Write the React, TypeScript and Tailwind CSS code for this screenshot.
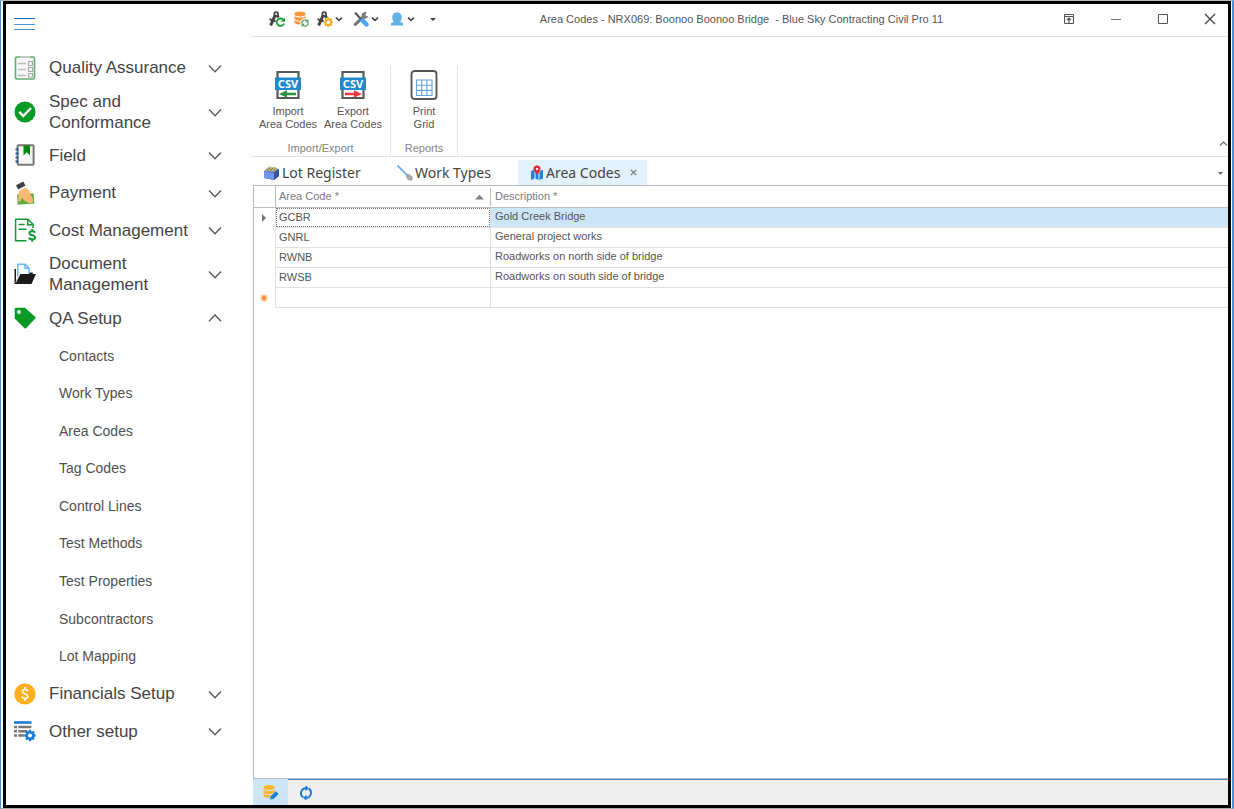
import type { ReactNode } from "react";

type IconProps = { children: ReactNode; box?: string; className?: string };

function Svg({ children, box = "0 0 22 22", className = "size-[22px]" }: IconProps) {
  return (
    <svg viewBox={box} className={`shrink-0 ${className}`} fill="none" aria-hidden="true">
      {children}
    </svg>
  );
}

function Chevron({ up = false }: { up?: boolean }) {
  return (
    <Svg box="0 0 14 14" className="size-[14px]">
      <path d={up ? "M1 10.2 7 4 13 10.2" : "M1 4.500 7 10.700 13 4.500"} stroke="#5a5a5a" strokeWidth="1.4" />
    </Svg>
  );
}

function SmallChevron() {
  return (
    <Svg box="0 0 8 8" className="size-2">
      <path d="M1 2.600 4 5.400 7 2.600" stroke="#444" strokeWidth="1.600" />
    </Svg>
  );
}

const gearPath =
  "M-1.2-6h2.4l.4 1.7 1.1.5 1.5-1L5.9-3.100l-1 1.500.5 1.100L7-.1v2.200l-1.700.4-.5 1.100 1 1.500L4.200 6.700l-1.500-1-1.100.5L1.200 8h-2.400l-.4-1.700-1.100-.5-1.500 1L-5.900 5.100l1-1.500-.5-1.100L-7 2.100V-.1l1.700-.4.5-1.100-1-1.500L-4.200-4.800l1.500 1 1.100-.5z";

function Gear({ x, y, scale, color }: { x: number; y: number; scale: number; color: string }) {
  return (
    <g transform={`translate(${x} ${y}) scale(${scale}) translate(0 -1)`}>
      <path d={gearPath} fill={color} />
      <circle cx="0" cy="1" r="2.500" fill="#fff" />
    </g>
  );
}

function Compass() {
  return (
    <g>
      <circle cx="7.200" cy="3" r="1.900" stroke="#444" strokeWidth="1.700" />
      <path d="M6 4.500 1.700 14.500M8.400 4.500 12 13" stroke="#444" strokeWidth="3" />
      <path d="M.5 8Q6 12.300 13 8.500" stroke="#444" strokeWidth="1.800" />
    </g>
  );
}

function Cycle({ x, y, scale, color, width = 2 }: { x: number; y: number; scale: number; color: string; width?: number }) {
  return (
    <g transform={`translate(${x} ${y}) scale(${scale})`}>
      <path d="M-4.500 1A4.600 4.600 0 0 1 3-3.500M4.500-1A4.600 4.600 0 0 1-3 3.500" stroke={color} strokeWidth={width} />
      <path d="M5-6v5H0zM-5 6V1h5z" fill={color} />
    </g>
  );
}

const icons = {
  quality: (
    <Svg box="0 0 22 24" className="h-6 w-[22px]">
      <rect x="1.500" y="1" width="19" height="22" rx="1.500" fill="#f8f8f8" stroke="#5cae6c" strokeWidth="1.600" />
      <path d="M6 1h10" stroke="#c8c8c8" strokeWidth="2" />
      <path d="M4 7.500h8M4 13.500h8M4 19.500h8" stroke="#bbb" strokeWidth="1.600" />
      <path d="M14.500 5.500h4v4h-4zM14.500 11.500h4v4h-4zM14.500 17.500h4v3.500h-4z" stroke="#aaa" strokeWidth="1.200" />
    </Svg>
  ),
  spec: (
    <Svg>
      <circle cx="11" cy="11" r="10.500" fill="#069b25" />
      <path d="m5.300 10.800 4 4.200 7.700-8" stroke="#fff" strokeWidth="2.400" />
    </Svg>
  ),
  field: (
    <Svg>
      <rect x="3.600" y="1.200" width="16" height="19.600" rx="1" fill="#f7f7f7" stroke="#777" strokeWidth="2" />
      <path d="M1.500 5.500h3M1.500 9.500h3M1.500 13.500h3M1.500 17.500h3" stroke="#275a91" strokeWidth="1.800" />
      <path d="M9.500 1.500H16V11.500l-3.250-3.200L9.500 11.500z" fill="#07860c" />
    </Svg>
  ),
  payment: (
    <Svg box="0 0 22 24" className="h-6 w-[22px]">
      <path d="m3 13.500 16.500-1.200.8 10.200L3.800 23.700z" fill="#5daf40" />
      <path
        d="M5 9.500 11.500 6.300c3.200 2 4.500 4.200 5 7 1.500 2.500 3 5.200 2.500 7-.4 1.700-2 1.500-3 1.800-1.500 0-2.500-.7-3.700-1.300C10.500 19.800 8.600 18 8 16.300L6.500 20c-.5 1.300-2.300.8-2.200-.5.300-2.500.2-4 .2-5.500 0-1.700 0-3 .5-4.500"
        fill="#fdbb76"
      />
      <path d="m10.500 17 4 4M12.700 15.300l4.200 4.500M14.500 13.500l3.500 4" stroke="#eda55e" strokeWidth=".8" />
      <path d="M2 4.200 9.300.5l2.200 4.300-7.300 3.700z" fill="#3c3f42" />
      <path d="m4.200 8.500 7.300-3.700.7 1.400L5 9.900z" fill="#f3f3f3" />
    </Svg>
  ),
  cost: (
    <Svg box="0 0 22 24" className="h-6 w-[22px]">
      <path d="M12.500 22.700H1.600V1.200H14l5 5V10M13.700 1.500v5.200H19M4.500 6.500h6M4.500 11.300h8" stroke="#129b35" strokeWidth="1.500" />
      <path
        d="M20.900 14.700c-.6-2-5.400-2-5.400.5 0 2.700 5.600 1.400 5.600 4.300 0 2.600-5.400 2.500-6 0M18.200 11v2.200M18.200 21.400v2.300"
        stroke="#129b35"
        strokeWidth="2.100"
      />
    </Svg>
  ),
  document: (
    <Svg>
      <path d="M.5 6h1.500v12L6 11h16l-4.500 10H.5z" fill="#1a1a1a" />
      <path d="M3.800 14V1h7.400l4 4v6H6.300z" fill="#f6fbff" />
      <path d="M3.800 13.500V1.200h7.400l3.800 3.800v6M11 1.500v3.800h3.800" stroke="#69b4f2" strokeWidth="1.400" />
      <path d="M15.500 9.500h3.300v2h-3.300z" fill="#1a1a1a" />
      <path d="M1.800 19.500 5.700 11.500" stroke="#fff" strokeWidth=".8" />
    </Svg>
  ),
  tag: (
    <Svg>
      <path d="M.7 1.500Q.7.700 1.500.700H11l10.300 9.300q.7.700 0 1.400L12 21.200q-.8.700-1.500 0L.7 11.500z" fill="#079b26" />
      <circle cx="5" cy="5" r="1.900" fill="#fff" />
    </Svg>
  ),
  finance: (
    <Svg>
      <circle cx="11" cy="11" r="10.600" fill="#ffb01c" />
      <path
        d="M13.900 8.200C13.300 6 8.400 6 8.400 8.600c0 2.900 5.400 1.800 5.400 4.800 0 2.700-5.400 2.700-5.900 0M11 4v2.500M11 15.500V18"
        stroke="#fff"
        strokeWidth="1.500"
      />
    </Svg>
  ),
  other: (
    <Svg>
      <path d="M0 2.500h17.500" stroke="#187bd5" strokeWidth="2.600" />
      <path d="M0 7h3M4.300 7h13M0 11.200h3M4.300 11.200h9M0 15.500h3M4.300 15.500h6" stroke="#777" strokeWidth="2.500" />
      <Gear x={16} y={15.500} scale={0.82} color="#187bd5" />
    </Svg>
  ),
};

function CsvIcon({ exporting = false }: { exporting?: boolean }) {
  return (
    <Svg box="0 0 28 30" className="h-[30px] w-7">
      <path d="M3.500 8V2h21v6M3.500 20v8h21V20" fill="#fff" stroke="#595959" strokeWidth="2.200" />
      <rect x="1" y="7.500" width="26" height="12.500" fill="#2089cf" />
      <text x="14" y="17.500" textAnchor="middle" fill="#fff" fontFamily="'Noto Sans', sans-serif" fontWeight="700" fontSize="11">
        CSV
      </text>
      {exporting ? (
        <path d="M6 22.700h9v-2.500l8 3.800-8 3.800v-2.500H6z" fill="#ee3538" />
      ) : (
        <path d="M22 22.700h-9v-2.500L5 24l8 3.800v-2.500h9z" fill="#2b9042" />
      )}
    </Svg>
  );
}

function Database({ color }: { color: string }) {
  return (
    <path
      d="M.5 3C.5.300 11.500.300 11.500 3v1.200C11.500 6.500.5 6.500.5 4.200zM.5 5.500c1.500 2 9.500 2 11 0v2.800C11.500 10.800.5 10.800.5 8.300zM.5 9.600c1.500 2 9.500 2 11 0v2.500c0 2.600-11 2.600-11 0z"
      fill={color}
    />
  );
}

type Section = { label: string; icon: ReactNode; children?: string[]; tall?: boolean };

const sections: Section[] = [
  { label: "Quality Assurance", icon: icons.quality },
  { label: "Spec and Conformance", icon: icons.spec, tall: true },
  { label: "Field", icon: icons.field },
  { label: "Payment", icon: icons.payment },
  { label: "Cost Management", icon: icons.cost },
  { label: "Document Management", icon: icons.document, tall: true },
  {
    label: "QA Setup",
    icon: icons.tag,
    children: [
      "Contacts",
      "Work Types",
      "Area Codes",
      "Tag Codes",
      "Control Lines",
      "Test Methods",
      "Test Properties",
      "Subcontractors",
      "Lot Mapping",
    ],
  },
  { label: "Financials Setup", icon: icons.finance },
  { label: "Other setup", icon: icons.other },
];

function Sidebar() {
  return (
    <aside className="flex w-[245px] shrink-0 flex-col">
      <button type="button" aria-label="Toggle menu" className="mt-[14px] ml-2 flex h-3 w-[21px] shrink-0 flex-col justify-between">
        <span className="h-px w-full bg-[#1670bd]" />
        <span className="h-px w-full bg-[#4b97d4]" />
        <span className="h-px w-full bg-[#4b97d4]" />
      </button>
      <nav className="mt-[19px] mb-[55px] flex min-h-[660px] flex-1 flex-col">
        {sections.map((section) => (
          <div key={section.label} className="contents">
            <button
              type="button"
              aria-expanded={Boolean(section.children)}
              className={`flex items-center pr-[29px] pl-2 text-left text-[17px] leading-[21px] text-[#444] ${
                section.tall ? "h-[50px] shrink-0" : "flex-1"
              }`}
            >
              <span className="flex w-[35px] shrink-0 items-center">{section.icon}</span>
              <span className="w-[148px]">{section.label}</span>
              <span className="ml-auto">
                <Chevron up={Boolean(section.children)} />
              </span>
            </button>
            {section.children && (
              <ul className="flex flex-9 flex-col">
                {section.children.map((child) => (
                  <li key={child} className="flex flex-1">
                    <a href="#" className="flex flex-1 items-center pl-[53px] text-[14px] leading-4 text-[#505050]">
                      {child}
                    </a>
                  </li>
                ))}
              </ul>
            )}
          </div>
        ))}
      </nav>
    </aside>
  );
}

function TitleBar() {
  return (
    <header className="flex h-[33px] shrink-0 items-center border-b border-[#e2e2e2] pb-[2px]">
      <div className="flex w-[210px] shrink-0 items-center pl-[18px]">
        <button type="button" aria-label="Refresh lookups" className="mr-2 flex">
          <Svg box="0 0 16 16" className="size-4">
            <Compass />
            <circle cx="11.500" cy="11" r="5" fill="#fff" />
            <path d="M14.500 9A3.700 3.700 0 1 0 15 12.500" stroke="#16a335" strokeWidth="1.800" />
            <path d="M16 6.500v4.300h-4.300z" fill="#16a335" />
          </Svg>
        </button>
        <button type="button" aria-label="Refresh data" className="mr-2 flex">
          <Svg box="0 0 16 16" className="size-4">
            <g transform="translate(1 -.5)">
              <Database color="#fb9640" />
            </g>
            <circle cx="12" cy="12" r="4.700" fill="#fff" />
            <Cycle x={12} y={12} scale={0.68} color="#48a565" width={1.800} />
          </Svg>
        </button>
        <button type="button" aria-label="Settings" className="mr-[10px] flex items-center gap-[2px]">
          <Svg box="0 0 16 16" className="size-4">
            <Compass />
            <circle cx="11.500" cy="11.500" r="5" fill="#fff" />
            <Gear x={11.300} y={11.200} scale={0.7} color="#f6ae25" />
          </Svg>
          <SmallChevron />
        </button>
        <button type="button" aria-label="Tools" className="mr-[10px] flex items-center gap-[2px]">
          <Svg box="0 0 16 16" className="size-4">
            <path d="m2.300 13.300 9-8.500" stroke="#777" strokeWidth="3.200" strokeLinecap="round" />
            <path d="M14 1.800A3.300 3.300 0 1 0 15.200 5l-2.500.5L11.500 4z" fill="#777" />
            <path d="M1 2.500 3 1l3 3.500L5.500 6z" fill="#555" />
            <path d="m4 4 5 5" stroke="#555" strokeWidth="2" />
            <path d="m9.500 9.500 4 4" stroke="#4da5f5" strokeWidth="4.500" strokeLinecap="round" />
          </Svg>
          <SmallChevron />
        </button>
        <button type="button" aria-label="User" className="mr-[14px] flex items-center gap-[2px]">
          <Svg box="0 0 16 16" className="size-4">
            <path
              d="M8 1.500C4.500 1.500 3.200 3.800 3.200 6.300c0 2 .6 3.400 1.700 4.400L2 12v2.500h12V12l-2.900-1.300c1.100-1 1.700-2.400 1.700-4.400C12.800 3.800 11.500 1.500 8 1.500"
              fill="#5fb2e3"
            />
          </Svg>
          <SmallChevron />
        </button>
        <button type="button" aria-label="Customize toolbar" className="flex">
          <Svg box="0 0 8 8" className="size-2">
            <path d="M1 3h6L4 6z" fill="#444" />
          </Svg>
        </button>
      </div>
      <h1 className="flex-1 text-center text-[11px] whitespace-pre text-[#555]">
        Area Codes - NRX069: Boonoo Boonoo Bridge{"  "}- Blue Sky Contracting Civil Pro 11
      </h1>
      <div className="flex w-[206px] shrink-0 items-center justify-end gap-[35px] pr-3">
        <button type="button" aria-label="Ribbon display options">
          <Svg box="0 0 12 12" className="size-3">
            <path d="M1.500 1.500h9v9h-9zM1 3.500h10" stroke="#555" />
            <path d="M6 10V5M4 7l2-2 2 2" stroke="#555" strokeWidth="1.200" />
          </Svg>
        </button>
        <button type="button" aria-label="Minimize">
          <Svg box="0 0 12 12" className="size-3">
            <path d="M1 6.500h10" stroke="#777" />
          </Svg>
        </button>
        <button type="button" aria-label="Maximize">
          <Svg box="0 0 12 12" className="size-3">
            <path d="M1.500 1.500h9v9h-9z" stroke="#555" />
          </Svg>
        </button>
        <button type="button" aria-label="Close">
          <Svg box="0 0 12 12" className="size-3">
            <path d="m1 1 10 10M11 1 1 11" stroke="#444" strokeWidth="1.300" />
          </Svg>
        </button>
      </div>
    </header>
  );
}

function RibbonButton({ icon, lines, width }: { icon: ReactNode; lines: string[]; width: string }) {
  return (
    <button type="button" className={`flex flex-col items-center gap-[5px] text-[11px] leading-[13px] text-[#555] ${width}`}>
      {icon}
      <span>
        {lines.map((line) => (
          <span key={line} className="block whitespace-nowrap">
            {line}
          </span>
        ))}
      </span>
    </button>
  );
}

function RibbonGroup({ label, width, children }: { label: string; width: string; children: ReactNode }) {
  return (
    <section aria-label={label} className={`flex h-[90px] shrink-0 flex-col items-center border-r border-[#e6e6e6] pb-[1px] ${width}`}>
      <div className="flex flex-1 items-start pt-1">{children}</div>
      <span className="text-[11px] leading-[14px] text-[#848484]">{label}</span>
    </section>
  );
}

function Ribbon() {
  return (
    <div className="flex h-[120px] shrink-0 items-end border-b border-[#e2e2e2]">
      <RibbonGroup label="Import/Export" width="w-[140px]">
        <RibbonButton width="w-[65px]" icon={<CsvIcon />} lines={["Import", "Area Codes"]} />
        <RibbonButton width="w-[65px]" icon={<CsvIcon exporting />} lines={["Export", "Area Codes"]} />
      </RibbonGroup>
      <RibbonGroup label="Reports" width="w-[67px]">
        <RibbonButton
          width="w-[60px]"
          icon={
            <Svg box="0 0 28 30" className="h-[30px] w-7">
              <rect x="1.500" y="1" width="25" height="28" rx="3" fill="#fff" stroke="#555" strokeWidth="1.900" />
              <path
                d="M6.500 10h15.500v15.500H6.500zM11.700 10v15.500M16.900 10v15.500M6.500 15.200H22M6.500 20.400H22"
                stroke="#65a4dc"
                strokeWidth="1.100"
              />
            </Svg>
          }
          lines={["Print", "Grid"]}
        />
      </RibbonGroup>
      <button type="button" aria-label="Collapse ribbon" className="mb-2 ml-auto">
        <Svg box="0 0 9 9" className="size-[9px]">
          <path d="M1 6.500 4.500 3 8 6.500" stroke="#777" strokeWidth="1.400" />
        </Svg>
      </button>
    </div>
  );
}

function Tabs() {
  const tab = "flex h-[25px] items-center gap-[2px] text-[14px] leading-5 whitespace-nowrap text-[#444]";
  return (
    <div className="flex h-7 shrink-0 items-end font-['Noto_Sans',sans-serif]">
      <div role="tablist" className="flex pl-3">
        <button type="button" role="tab" aria-selected="false" className={`${tab} w-[134px]`}>
          <Svg box="0 0 17 16" className="h-4 w-[17px]">
            <path d="m1 6 5-4 10 2v7l-5 4-10-2z" fill="#4467ba" />
            <path d="m1 6 10 2v7L1 13z" fill="#7195ef" />
            <path d="m11 8 5-4v7l-5 4z" fill="#3555a4" />
            <path d="m2 5.800 1-2 2-1 1-1.500 3 .8 3-.2 3 2-4 3z" fill="#c4b882" />
            <path d="M4 5.500 7 3M7 6l3-3M10 6.500l3-3" stroke="#716b50" />
          </Svg>
          Lot Register
        </button>
        <button type="button" role="tab" aria-selected="false" className={`${tab} w-[121px]`}>
          <Svg box="0 0 16 16" className="size-4">
            <path d="m.5.500 10 10" stroke="#5cabef" strokeWidth="1.600" />
            <path d="m9 11 2-2 4 2.500q1 3-1 4l-3-1z" fill="#aaa" stroke="#888" strokeWidth=".5" />
          </Svg>
          Work Types
        </button>
        <div className="flex w-[129px] items-center bg-[#e3f1fb] pl-3">
          <button type="button" role="tab" aria-selected="true" className={tab}>
            <Svg box="0 0 14 16" className="h-4 w-[14px]">
              <path d="m1 6 3.500-1.500v9L1 15zM5.500 4.500l3 2.500v8l-3-1.500zM9.500 6.500 13 4.500v9L9.500 15z" fill="#257fda" />
              <path d="M7 10C5 7 3.500 5.800 3.500 4a3.500 3.500 0 0 1 7 0C10.500 5.800 9 7 7 10" fill="#e12630" />
              <circle cx="7" cy="4" r="1.200" fill="#fff" />
            </Svg>
            Area Codes
          </button>
          <button type="button" aria-label="Close tab" className="ml-[10px]">
            <Svg box="0 0 7 7" className="size-[7px]">
              <path d="m.8.800 5.400 5.400M6.200.800.8 6.200" stroke="#777" strokeWidth="1.200" />
            </Svg>
          </button>
        </div>
      </div>
      <button type="button" aria-label="Tab list" className="mr-1 mb-2 ml-auto">
        <Svg box="0 0 7 7" className="size-[7px]">
          <path d="M1 2h5L3.500 5z" fill="#666" />
        </Svg>
      </button>
    </div>
  );
}

const rows = [
  { code: "GCBR", description: "Gold Creek Bridge" },
  { code: "GNRL", description: "General project works" },
  { code: "RWNB", description: "Roadworks on north side of bridge" },
  { code: "RWSB", description: "Roadworks on south side of bridge" },
];

function DataGrid() {
  const cell = "border-b border-[#e1e1e1] p-0";
  return (
    <main className="ml-[2px] flex-1 border-t border-b border-l border-[#b9b9b9]">
      <table className="w-full table-fixed border-separate border-spacing-0 text-[11px] leading-[13px] text-[#555]">
        <colgroup>
          <col className="w-[22px]" />
          <col className="w-[215px]" />
          <col />
        </colgroup>
        <thead>
          <tr className="h-[22px] text-[#7b7b7b]">
            <th aria-label="Row state" className="border-r border-b border-[#bdbdbd] p-0" />
            <th scope="col" className="border-b border-[#bdbdbd] p-0 font-normal">
              <span className="flex h-[18px] items-center justify-between border-r border-[#bdbdbd] pr-[6px] pl-[3px]">
                Area Code *
                <Svg box="0 0 9 6" className="h-[6px] w-[9px]">
                  <path d="M0 5.500h9L4.500.8z" fill="#808080" />
                </Svg>
              </span>
            </th>
            <th scope="col" className="border-b border-[#bdbdbd] p-0 pl-1 text-left font-normal">
              Description *
            </th>
          </tr>
        </thead>
        <tbody>
          {rows.map((row, index) => (
            <tr key={row.code} className="h-5">
              <td className="border-r border-[#e1e1e1] p-0">
                {index === 0 && (
                  <Svg box="0 0 6 8" className="ml-[7px] h-2 w-[6px]">
                    <path d="M1 0v8l4-4z" fill="#777" />
                  </Svg>
                )}
              </td>
              <td className={`${cell} border-r`}>
                <span
                  className={`flex h-[19px] items-center pl-[3px] ${
                    index === 0 ? "outline-1 outline-[#777] outline-dotted -outline-offset-1" : ""
                  }`}
                >
                  {row.code}
                </span>
              </td>
              <td className={`${cell} pb-[3px] pl-1 ${index === 0 ? "bg-[#cde6f7]" : ""}`}>{row.description}</td>
            </tr>
          ))}
          <tr className="h-5">
            <td className="border-r border-[#e1e1e1] p-0">
              <Svg box="0 0 8 8" className="ml-[6px] size-2">
                <path d="M4 0v8M0 4h8M1.200 1.200l5.600 5.600M6.800 1.200 1.200 6.800" stroke="#f99a4a" strokeWidth="1.100" />
                <circle cx="4" cy="4" r="2.100" fill="#f98f35" />
              </Svg>
            </td>
            <td className={`${cell} border-r`} />
            <td className={cell} />
          </tr>
        </tbody>
      </table>
    </main>
  );
}

function StatusBar() {
  return (
    <footer className="ml-[2px] flex h-[26px] shrink-0 bg-[#efefef]">
      <button type="button" aria-label="Edit mode" className="flex w-[35px] items-center justify-center bg-[#cde6f7]">
        <Svg box="0 0 16 16" className="size-4">
          <Database color="#fdb42c" />
          <path d="m6.500 16 .8-3.800 5.500-5.500 3.200 3.200-5.500 5.500z" fill="#217fd5" stroke="#cde6f7" strokeWidth=".8" />
        </Svg>
      </button>
      <div className="flex flex-1 items-center border-t border-[#4088c6] pl-[11px]">
        <button type="button" aria-label="Refresh" className="flex">
          <Svg box="0 0 14 14" className="size-[14px]">
            <path
              d="M4.300 11.400A5 5 0 0 1 7 2.200M9.700 2.600A5 5 0 0 1 7 11.800"
              stroke="#187bd5"
              strokeWidth="1.900"
            />
            <path d="M6.500-.8v6L9.800 2.200zM7.500 8.800v6L4.200 11.800z" fill="#187bd5" />
          </Svg>
        </button>
      </div>
    </footer>
  );
}

export default function App() {
  return (
    <div className="flex min-h-screen border-t border-r-2 border-b border-l border-t-[#b5bcb8] border-r-[#4a90d2] border-b-[#aaa] border-l-[#4a90d2] bg-white pr-px pl-[2px] font-['Liberation_Sans',Arial,sans-serif]">
      <div className="flex min-w-0 flex-1 border-3 border-black bg-white">
        <Sidebar />
        <div className="flex min-w-0 flex-1 flex-col">
          <TitleBar />
          <Ribbon />
          <Tabs />
          <DataGrid />
          <StatusBar />
        </div>
      </div>
    </div>
  );
}
